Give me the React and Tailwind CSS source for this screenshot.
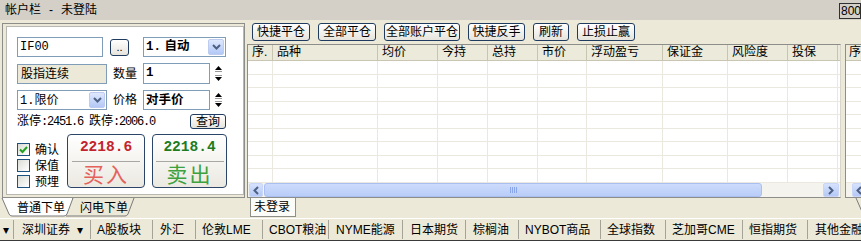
import React from "react";

const SANS = "font-['Liberation_Sans','Noto_Sans_CJK_SC',sans-serif]";
const MONO = "font-['Liberation_Mono','Noto_Sans_CJK_SC',monospace]";

const columns = [
  { label: "序.", w: "w-[25px]" },
  { label: "品种", w: "w-[105px]" },
  { label: "均价", w: "w-[60px]" },
  { label: "今持", w: "w-[50px]" },
  { label: "总持", w: "w-[50px]" },
  { label: "市价", w: "w-[49px]" },
  { label: "浮动盈亏", w: "w-[76px]" },
  { label: "保证金", w: "w-[65px]" },
  { label: "风险度", w: "w-[60px]" },
  { label: "投保", w: "w-[50px]" },
];

const markets = [
  { label: "▾", w: "w-[14px]", pad: "pl-[3px]" },
  { label: "深圳证券  ▾", w: "w-[77px]", pad: "pl-[8px]" },
  { label: "A股板块", w: "w-[62px]", pad: "pl-[6px]" },
  { label: "外汇", w: "w-[43px]", pad: "pl-[7px]" },
  { label: "伦敦LME", w: "w-[67px]", pad: "pl-[6px]" },
  { label: "CBOT粮油", w: "w-[66px]", pad: "pl-[6px]" },
  { label: "NYME能源", w: "w-[74px]", pad: "pl-[7px]" },
  { label: "日本期货", w: "w-[63px]", pad: "pl-[7px]" },
  { label: "棕榈油", w: "w-[53px]", pad: "pl-[7px]" },
  { label: "NYBOT商品", w: "w-[82px]", pad: "pl-[6px]" },
  { label: "全球指数", w: "w-[65px]", pad: "pl-[6px]" },
  { label: "芝加哥CME", w: "w-[77px]", pad: "pl-[6px]" },
  { label: "恒指期货", w: "w-[65px]", pad: "pl-[6px]" },
];

const rows = [0, 1, 2, 3, 4, 5, 6, 7, 8];

function XpButton({ children, className }) {
  return (
    <div
      className={`h-[18px] rounded-[3px] border border-[#1f3b5f] bg-linear-to-b from-white to-[#e6e4dc] text-[12px] leading-none flex items-center justify-center shrink-0 ${className}`}
    >
      {children}
    </div>
  );
}

function DropArrow() {
  return (
    <div className="w-[16px] h-[16px] rounded-[2px] border border-[#bccbef] bg-linear-to-b from-[#dfe8fd] to-[#b3c8f6] flex items-center justify-center shrink-0">
      <svg width="9" height="6" viewBox="0 0 9 6">
        <path d="M1 1 L4.5 4.5 L8 1" stroke="#4d6185" strokeWidth="2" fill="none" />
      </svg>
    </div>
  );
}

function Spin() {
  return (
    <div className="w-[16px] h-full flex flex-col items-center justify-between py-[3px] shrink-0">
      <svg width="7" height="6" viewBox="0 0 7 6">
        <path d="M0 4 L3.5 0 L7 4Z" fill="#000" />
        <rect x="0" y="5" width="7" height="1" fill="#9a9a9a" />
      </svg>
      <svg width="7" height="6" viewBox="0 0 7 6">
        <rect x="0" y="0" width="7" height="1" fill="#9a9a9a" />
        <path d="M0 2 L3.5 6 L7 2Z" fill="#000" />
      </svg>
    </div>
  );
}

function Check({ checked, label }) {
  return (
    <div className="flex items-center h-[13px]">
      <div className="w-[13px] h-[13px] border border-[#1c5180] bg-linear-to-br from-[#dcdcd6] to-white flex items-center justify-center">
        {checked && (
          <svg width="9" height="8" viewBox="0 0 9 8">
            <path d="M1 3.5 L3.5 6 L8 1" stroke="#21a121" strokeWidth="2" fill="none" />
          </svg>
        )}
      </div>
      <span className="ml-[5px] text-[12px] leading-none">{label}</span>
    </div>
  );
}

function TradeButton({ price, action, priceColor, actionColor, w }) {
  return (
    <div
      className={`${w} h-[54px] rounded-[4px] border border-[#2a4567] bg-linear-to-b from-white to-[#ebe9e1] flex flex-col items-center shrink-0`}
    >
      <div className={`h-[26px] flex items-center ${MONO} font-bold text-[14.5px] ${priceColor}`}>
        {price}
      </div>
      <div className="w-[68px] h-px bg-[#a9a9a4]" />
      <div className={`flex-1 flex items-center text-[21px] leading-none tracking-[2px] ${actionColor}`}>
        {action}
      </div>
    </div>
  );
}

function ScrollArrow({ dir, w }) {
  return (
    <div
      className={`${w} h-[14px] rounded-[2px] border border-[#c9d6f7] bg-linear-to-b from-[#d6e2fd] to-[#b6c9f5] flex items-center justify-center shrink-0`}
    >
      <svg width="6" height="9" viewBox="0 0 6 9">
        <path
          d={dir === "left" ? "M5 1 L1.5 4.5 L5 8" : "M1 1 L4.5 4.5 L1 8"}
          stroke="#4d6185"
          strokeWidth="2"
          fill="none"
        />
      </svg>
    </div>
  );
}

export default function App() {
  return (
    <div className={`w-[861px] h-[241px] overflow-hidden bg-[#ece9d8] text-black flex flex-col ${SANS}`}>
      {/* title bar */}
      <div className="h-[20px] bg-[#d4d0c8] flex items-center pl-[5px] shrink-0">
        <span className="text-[12px] leading-none">帐户栏</span>
        <span className="text-[12px] leading-none ml-[8px]">-</span>
        <span className="text-[12px] leading-none ml-[8px]">未登陆</span>
        <div className="ml-auto mt-[1px] h-[16px] w-[22px] border border-[#303030] pl-[1px] text-[12px] leading-[14px] overflow-hidden">
          800
        </div>
      </div>

      <div className="h-[198px] flex shrink-0">
        {/* left order panel */}
        <div className="w-[245px] flex flex-col shrink-0">
          <div className="mt-[3px] ml-[2px] w-[243px] h-[175px] border border-[#8d8d8a] pl-[3px] pt-[2px] pb-[2px] bg-[#ece9d8]">
            <div className="w-[238px] h-full border border-[#b9b8b0] bg-white pl-[10px] pt-[10px]">
              <div className="h-[20px] flex items-center">
                <div className={`w-[86px] h-[20px] border border-[#7f9db9] pl-[2px] flex items-center text-[12px] ${MONO}`}>
                  IF00
                </div>
                <XpButton className="ml-[7px] w-[19px] !h-[17px] !text-[11px]">..</XpButton>
                <div className="ml-[14px] w-[83px] h-[20px] border border-[#7f9db9] flex items-center pl-[2px] pr-px">
                  <span className="text-[12.5px] font-bold">
                    <span className={MONO}>1.</span> 自动
                  </span>
                  <div className="ml-auto">
                    <DropArrow />
                  </div>
                </div>
              </div>

              <div className="mt-[6px] h-[21px] flex items-center">
                <div className="w-[90px] h-[20px] border border-[#7f9db9] bg-[#ece9d8] pl-[3px] flex items-center text-[12px]">
                  股指连续
                </div>
                <span className="ml-[6px] w-[30px] text-[12px]">数量</span>
                <div className={`w-[67px] h-[21px] border border-[#7f9db9] pl-[2px] flex items-center text-[12.5px] font-bold ${MONO}`}>
                  1
                </div>
                <Spin />
              </div>

              <div className="mt-[6px] h-[20px] flex items-center">
                <div className="w-[90px] h-[20px] border border-[#7f9db9] flex items-center pl-[2px] pr-px">
                  <span className="text-[12px]">
                    <span className={MONO}>1.</span>限价
                  </span>
                  <div className="ml-auto">
                    <DropArrow />
                  </div>
                </div>
                <span className="ml-[6px] w-[30px] text-[12px]">价格</span>
                <div className="w-[67px] h-[20px] border border-[#7f9db9] pl-[2px] flex items-center text-[12.5px] font-bold">
                  对手价
                </div>
                <Spin />
              </div>

              <div className="mt-[4px] h-[15px] w-[209px] flex items-center">
                <span className="text-[12px] leading-none whitespace-pre">
                  涨停<span className={`${MONO} text-[12px] tracking-[-1.2px]`}>:2451.6 </span>跌停
                  <span className={`${MONO} text-[12px] tracking-[-1.2px]`}>:2006.0</span>
                </span>
                <XpButton className="ml-auto w-[36px] !h-[15px]">查询</XpButton>
              </div>

              <div className="mt-[5px] flex">
                <div className="w-[50px] pt-[9px] flex flex-col gap-[3px]">
                  <Check checked label="确认" />
                  <Check label="保值" />
                  <Check label="预埋" />
                </div>
                <TradeButton
                  w="w-[78px]"
                  price="2218.6"
                  action="买入"
                  priceColor="text-[#c3232b]"
                  actionColor="text-[#e4625c]"
                />
                <div className="w-[7px] shrink-0" />
                <TradeButton
                  w="w-[75px]"
                  price="2218.4"
                  action="卖出"
                  priceColor="text-[#1e7c1e]"
                  actionColor="text-[#3da23d]"
                />
              </div>
            </div>
          </div>

          {/* sheet tabs */}
          <div className="relative h-[20px] flex items-center text-[12px]">
            <svg className="absolute inset-0" width="245" height="20" viewBox="0 0 245 20">
              <path d="M66 18 L125 18 Q127 18 128 16 L134 0" stroke="#7a7a7a" fill="none" />
              <path
                d="M2 0 L9 16 Q10 18 12 18 L64 18 Q66 18 67 16 L73 0 Z"
                fill="#ffffff"
                stroke="#7a7a7a"
              />
              <path d="M3 0.5 L72 0.5" stroke="#ffffff" />
            </svg>
            <span className="relative ml-[17px]">普通下单</span>
            <span className="relative ml-[15px]">闪电下单</span>
          </div>
        </div>

        {/* right position area */}
        <div className="flex-1 flex flex-col pl-[2px]">
          <div className="h-[24px] pt-[3px] pl-[5px] flex gap-[8px]">
            <XpButton className="w-[58px]">快捷平仓</XpButton>
            <XpButton className="w-[58px]">全部平仓</XpButton>
            <XpButton className="w-[76px]">全部账户平仓</XpButton>
            <XpButton className="w-[57px]">快捷反手</XpButton>
            <XpButton className="w-[36px]">刷新</XpButton>
            <XpButton className="w-[58px]">止损止赢</XpButton>
          </div>

          <div className="flex h-[154px]">
            <div className="w-[594px] h-full border border-[#8d8d8a] border-r-[#d8d6cc] bg-white flex flex-col">
              <div className="h-[16px] flex bg-[#ebeadb] border-b border-[#c9c5b3] shrink-0">
                {columns.map((c) => (
                  <div
                    key={c.label}
                    className={`${c.w} h-full border-r border-[#c7c4b2] pl-[4px] text-[12px] leading-[15px] whitespace-nowrap overflow-hidden shrink-0`}
                  >
                    {c.label}
                  </div>
                ))}
              </div>
              <div className="h-[122px] flex flex-col shrink-0">
                {rows.map((r) => (
                  <div
                    key={r}
                    className={`flex border-b border-[#ebe9df] shrink-0 ${r % 2 ? "h-[13px]" : "h-[14px]"}`}
                  >
                    {columns.map((c) => (
                      <div key={c.label} className={`${c.w} h-full border-r border-[#ebe9df] shrink-0`} />
                    ))}
                  </div>
                ))}
              </div>
              <div className="h-[14px] flex pl-[1px] bg-[#f4f3ee] shrink-0">
                <ScrollArrow dir="left" w="w-[14px]" />
                <div className="ml-[1px] w-[498px] h-[14px] rounded-[3px] border border-[#a9bff2] bg-linear-to-b from-[#cddbfc] to-[#b9cdf8] flex items-center justify-center gap-[1px] shrink-0">
                  <div className="w-px h-[6px] bg-[#8aa6ea]" />
                  <div className="w-px h-[6px] bg-[#8aa6ea]" />
                  <div className="w-px h-[6px] bg-[#8aa6ea]" />
                  <div className="w-px h-[6px] bg-[#8aa6ea]" />
                </div>
                <div className="flex-1" />
                <ScrollArrow dir="right" w="w-[16px]" />
                <div className="w-[1px]" />
              </div>
            </div>

            <div className="ml-[4px] flex-1 h-full border-l border-t border-b border-[#8d8d8a] bg-white flex flex-col overflow-hidden">
              <div className="h-[16px] bg-[#ebeadb] border-b border-[#c9c5b3] pl-[3px] text-[12px] leading-[15px] whitespace-nowrap overflow-hidden shrink-0">
                序
              </div>
              <div className="h-[122px] flex flex-col shrink-0">
                {rows.map((r) => (
                  <div
                    key={r}
                    className={`border-b border-[#ebe9df] shrink-0 ${r % 2 ? "h-[13px]" : "h-[14px]"}`}
                  />
                ))}
              </div>
              <div className="h-[14px] pl-[6px] bg-[#f4f3ee] shrink-0 flex">
                <ScrollArrow dir="left" w="w-[14px]" />
              </div>
            </div>
          </div>

          <div className="h-[20px] flex">
            <div className="ml-[3px] w-[46px] h-[19px] border-l border-r border-b border-[#8d8d8a] bg-[#fbfbf8] pl-[3px] text-[12px] leading-[18px]">
              未登录
            </div>
            <div className="flex-1" />
            <svg width="12" height="20" viewBox="0 0 12 20">
              <path d="M2 0 L9 16 Q10 18 12 18" stroke="#7a7a7a" fill="none" />
            </svg>
          </div>
        </div>
      </div>

      {/* market toolbar */}
      <div className="h-[23px] flex items-center border-t border-white border-b border-b-[#3a3a3a] bg-[#ece9d8] text-[12px] leading-none whitespace-nowrap shrink-0">
        {markets.map((m) => (
          <div
            key={m.label}
            className={`${m.w} ${m.pad} h-[19px] flex items-center border-r border-[#a5a397] shrink-0 whitespace-pre`}
          >
            {m.label}
          </div>
        ))}
        <div className="pl-[7px] h-[19px] flex items-center whitespace-nowrap">其他金融</div>
      </div>
    </div>
  );
}
